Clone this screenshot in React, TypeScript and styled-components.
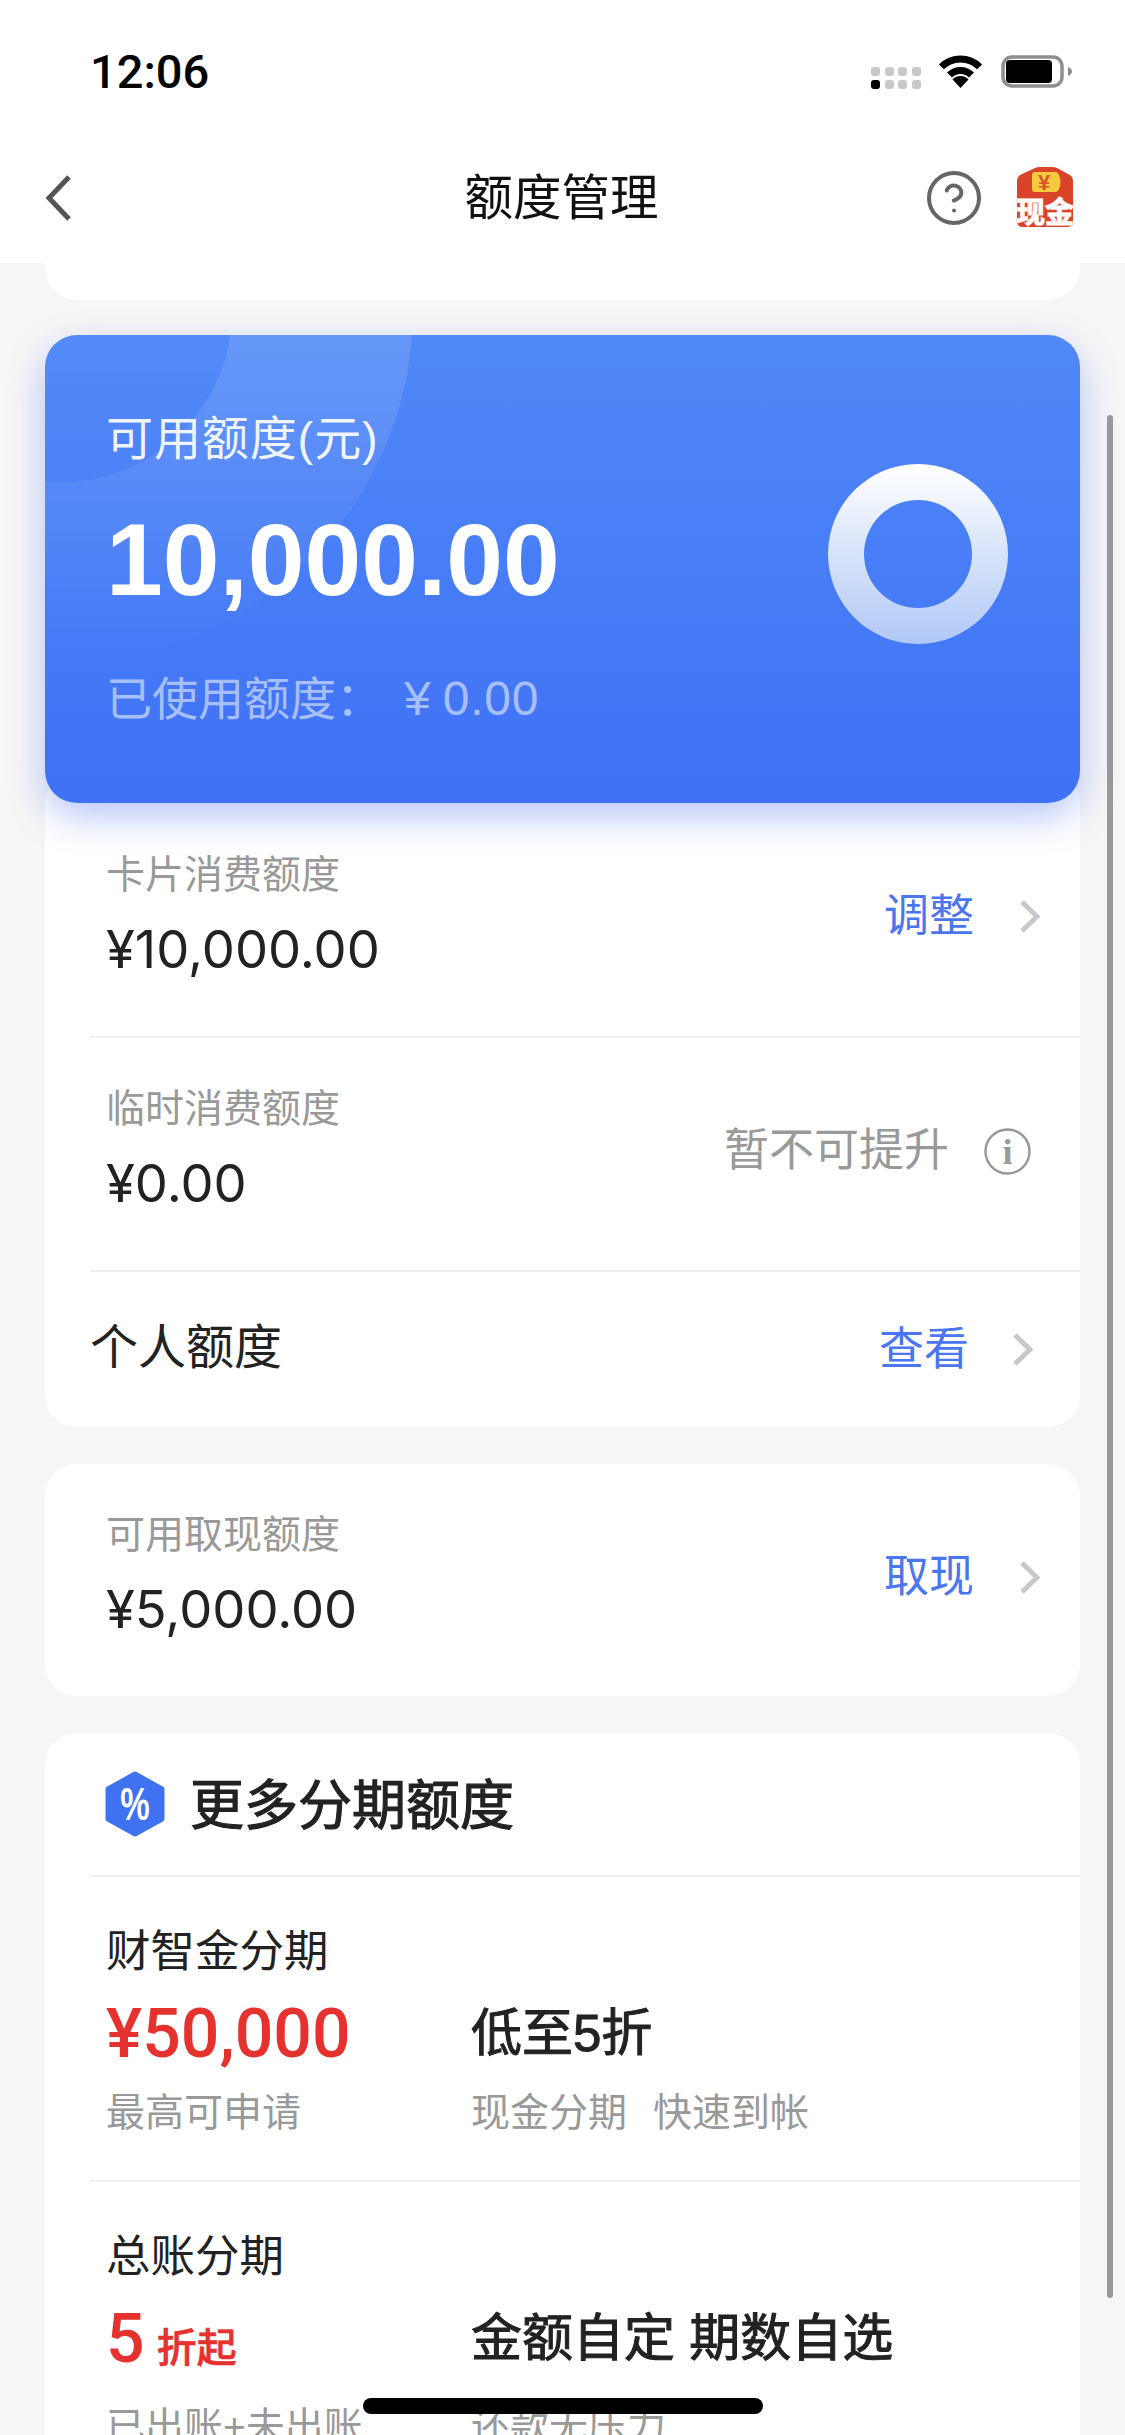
import styled, { createGlobalStyle } from "styled-components"
import { CircleHelp } from "lucide-react"

const FONT = `"Liberation Sans", "Noto Sans CJK SC", sans-serif`
const BLUE = "#4a76f0"
const GREY = "#999999"
const INK = "#222222"
const RED = "#e5322f"

const GlobalStyle = createGlobalStyle`
    * { box-sizing: border-box; }
    html, body {
        margin: 0;
        height: 2435px;
        overflow: hidden;
        background: #f6f6f6;
        font-family: ${FONT};
    }
`

const Page = styled.div`
    position: relative;
    width: 1125px;
    height: 2435px;
    overflow: hidden;
    background: #f6f6f6;
`

const Header = styled.header`
    position: relative;
    z-index: 2;
    background: #ffffff;
`

const StatusBar = styled.div`
    display: flex;
    align-items: center;
    height: 131px;
    padding: 49px 53px 38px 90px;
`

const Time = styled.div`
    font-family: Roboto, sans-serif;
    font-size: 47px;
    font-weight: 500;
    color: #000000;
    margin-right: auto;
`

const SignalIcon = styled.svg`
    margin: 13px 16px 0 0;
`

const WifiIcon = styled.svg`
    margin-right: 17px;
`

const NavBar = styled.nav`
    display: grid;
    grid-template-columns: 1fr auto 1fr;
    align-items: center;
    height: 132px;
    padding: 2px 50px 0 45px;
`

const NavTitle = styled.h1`
    margin: 0 0 0 3px;
    font-size: 48.5px;
    font-weight: 400;
    line-height: 60px;
    color: #111111;
`

const NavActions = styled.div`
    display: flex;
    align-items: center;
    justify-content: flex-end;
    gap: 31px;
    color: #666666;
`

const Content = styled.main`
    padding: 0 45px;
`

const TopSliver = styled.div`
    height: 37px;
    background: #ffffff;
    border-radius: 0 0 32px 32px;
`

const QuotaCard = styled.section`
    position: relative;
    z-index: 1;
    display: flex;
    justify-content: space-between;
    height: 468px;
    margin-top: 35px;
    padding: 81px 72px 0 61px;
    overflow: hidden;
    border-radius: 32px;
    background: linear-gradient(180deg, #5089f8 0%, #3f71f5 100%);
`

const QuotaShadow = styled.div`
    position: relative;
    z-index: 1;
    border-radius: 32px;
    box-shadow: 0 14px 36px rgba(63, 100, 235, 0.36);
`

const QuotaGlow = styled.div`
    position: absolute;
    left: -338px;
    top: -378px;
    width: 706px;
    height: 706px;
    border-radius: 50%;
    background: radial-gradient(circle at center, rgba(255, 255, 255, 0.02) 172px, rgba(255, 255, 255, 0.13) 172.5px);
    mask-image: linear-gradient(180deg, #000 54%, transparent 100%);
`

const QuotaText = styled.div`
    position: relative;
`

const QuotaLabel = styled.div`
    font-size: 47px;
    line-height: 45px;
    letter-spacing: 0.9px;
    color: rgba(255, 255, 255, 0.92);
`

const QuotaAmount = styled.div`
    margin-top: 49px;
    font-size: 102px;
    font-weight: 700;
    line-height: 100px;
    color: #ffffff;
`

const QuotaUsed = styled.div`
    margin-top: 66px;
    font-size: 46px;
    line-height: 45px;
    color: rgba(255, 255, 255, 0.55);
`

const UsedValue = styled.span`
    margin-left: 22px;
    font-size: 48px;
    letter-spacing: 0.8px;
    word-spacing: -3px;
`

const QuotaRing = styled.svg`
    position: relative;
    margin-top: 48px;
`

const Card = styled.section`
    margin-top: 37px;
    padding-left: 45px;
    overflow: hidden;
    background: #ffffff;
    border-radius: 32px;
`

const ListCard = styled(Card)`
    margin-top: -32px;
    padding-top: 32px;
`

const Row = styled.div<{ $height: number; $end: number; $flush?: boolean }>`
    display: flex;
    align-items: center;
    justify-content: space-between;
    height: ${p => p.$height}px;
    padding: 0 ${p => p.$end}px ${p => (p.$flush ? 0 : 6)}px ${p => (p.$flush ? 0 : 16)}px;
    & + & {
        border-top: 2px solid #eeeeee;
    }
`

const RowText = styled.div`
    margin-bottom: 2px;
`

const RowLabel = styled.div`
    font-size: 39px;
    line-height: 38px;
    color: ${GREY};
`

const RowValue = styled.div`
    margin-top: 28px;
    font-family: Inter, ${FONT};
    font-size: 52.5px;
    line-height: 54px;
    color: ${INK};
`

const RowTitle = styled.div`
    margin-bottom: 3px;
    font-size: 48px;
    line-height: 56px;
    color: ${INK};
`

const RowAction = styled.div<{ $gap: number }>`
    display: flex;
    align-items: center;
    gap: ${p => p.$gap}px;
`

const ActionText = styled.span<{ $muted?: boolean }>`
    font-size: 45px;
    line-height: 50px;
    color: ${p => (p.$muted ? GREY : BLUE)};
`

const SectionHead = styled.div`
    display: flex;
    align-items: center;
    gap: 25px;
    height: 142px;
    padding-left: 15px;
`

const SectionTitle = styled.h2`
    margin: 3px 0 0;
    font-size: 54px;
    font-weight: 400;
    line-height: 60px;
    color: ${INK};
    -webkit-text-stroke: 1.1px ${INK};
`

const Plan = styled.div`
    display: grid;
    grid-template-columns: 365px 1fr;
    align-content: start;
    row-gap: 25px;
    height: 305px;
    padding: 53px 0 0 16px;
    border-top: 2px solid #eeeeee;
`

const PlanName = styled.div`
    grid-column: 1 / -1;
    font-size: 44.5px;
    line-height: 44px;
    color: ${INK};
`

const PlanFigure = styled.div`
    display: flex;
    align-items: baseline;
    font-family: Roboto, ${FONT};
    font-size: 68px;
    font-weight: 500;
    line-height: 70px;
    color: ${RED};
`

const FigureUnit = styled.span`
    margin-left: 12px;
    font-family: ${FONT};
    font-size: 40px;
    -webkit-text-stroke: 0.6px ${RED};
`

const PlanPitch = styled.div`
    font-size: 51px;
    line-height: 70px;
    color: ${INK};
    -webkit-text-stroke: 1px ${INK};
`

const PlanNote = styled.div`
    font-size: 39px;
    line-height: 38px;
    color: ${GREY};
`

const NoteGap = styled.span`
    margin-left: 26px;
`

const ScrollThumb = styled.div`
    position: absolute;
    z-index: 3;
    top: 415px;
    right: 12px;
    width: 6px;
    height: 1883px;
    border-radius: 3px;
    background: #999999;
`

const HomeBar = styled.div`
    position: absolute;
    z-index: 3;
    left: 363px;
    bottom: 21px;
    width: 400px;
    height: 16px;
    border-radius: 8px;
    background: #000000;
`

const Signal = () => (
    <SignalIcon width="50" height="22" viewBox="0 0 50 22">
        {[0, 1].map(row =>
            [0, 14, 27, 41].map((x, col) => (
                <rect
                    key={`${row}-${col}`}
                    x={x}
                    y={row * 13}
                    width="9"
                    height="9"
                    rx="3"
                    fill={row === 1 && col === 0 ? "#000000" : "#c8c8c8"}
                />
            ))
        )}
    </SignalIcon>
)

const Wifi = () => (
    <WifiIcon width="47" height="34" viewBox="0 0 47 34">
        <path d="M4.4 12.9A27 27 0 0 1 42.6 12.9" fill="none" stroke="#000" strokeWidth="7" />
        <path d="M12.5 21A15.5 15.5 0 0 1 34.5 21" fill="none" stroke="#000" strokeWidth="7" />
        <path d="M23.5 34L15.5 25.5A11 11 0 0 1 31.5 25.5Z" fill="#000" />
    </WifiIcon>
)

const Battery = () => (
    <svg width="71" height="33" viewBox="0 0 71 33">
        <rect x="2" y="2" width="59" height="29" rx="9" fill="none" stroke="#8e8e8e" strokeWidth="3.5" />
        <rect x="5" y="5" width="46" height="23" rx="4" fill="#000" />
        <path d="M67 12C70 13 71 15 71 16.500C71 18 70 20 67 21Z" fill="#8e8e8e" />
    </svg>
)

const BackArrow = () => (
    <svg width="27" height="48" viewBox="0 0 27 48">
        <path d="M24 3L4 24L24 45" fill="none" stroke="#555555" strokeWidth="5" />
    </svg>
)

const RedPacket = () => (
    <svg width="60" height="62" viewBox="0 0 60 62" overflow="visible">
        <path d="M2 14Q2 9 7 7L20 1Q22 0 25 0H37Q40 0 42 1L53 7Q58 9 58 14V54Q58 60 52 60H8Q2 60 2 54Z" fill="#d9432a" />
        <path d="M17 8Q17 5 20 5H40Q43 5 44 8Q47 15 44 22Q43 25 40 25H20Q17 25 17 22Z" fill="#f6c93e" />
        <text x="29" y="23" fontFamily="Liberation Sans" fontSize="22" fontWeight="700" textAnchor="middle" fill="#d9532a">¥</text>
        <text
            x="30"
            y="56"
            fontFamily="Noto Sans CJK SC"
            fontSize="29"
            fontWeight="700"
            textAnchor="middle"
            fill="#ffffff"
            stroke="#f7cfc5"
            strokeWidth="1.5"
            paintOrder="stroke"
        >
            现金
        </text>
    </svg>
)

const Ring = () => (
    <QuotaRing width="180" height="180" viewBox="0 0 180 180">
        <defs>
            <linearGradient id="ringFill" x1="0" y1="0" x2="0" y2="1">
                <stop offset="0" stopColor="#ffffff" />
                <stop offset="1" stopColor="#b0c8f6" />
            </linearGradient>
        </defs>
        <path
            fillRule="evenodd"
            fill="url(#ringFill)"
            d="M90 0A90 90 0 1 1 90 180A90 90 0 1 1 90 0ZM90 36A54 54 0 1 0 90 144A54 54 0 1 0 90 36Z"
        />
    </QuotaRing>
)

const Chevron = () => (
    <svg width="21" height="33" viewBox="0 0 21 33">
        <path d="M3 2L18 16.500L3 31" fill="none" stroke="#c7c7cc" strokeWidth="5" />
    </svg>
)

const InfoIcon = () => (
    <svg width="47" height="47" viewBox="0 0 47 47">
        <circle cx="23.500" cy="23.500" r="22" fill="none" stroke={GREY} strokeWidth="2.500" />
        <text x="23.500" y="36" fontFamily="Liberation Serif" fontSize="36" fontWeight="700" textAnchor="middle" fill={GREY}>i</text>
    </svg>
)

const PercentBadge = () => (
    <svg width="60" height="66" viewBox="0 0 60 66">
        <path d="M30 3L57 18V48L30 63L3 48V18Z" fill="#3f72f0" stroke="#3f72f0" strokeWidth="5" strokeLinejoin="round" />
        <text
            transform="translate(30 49) scale(0.72 1)"
            fontFamily="Liberation Sans"
            fontSize="46"
            fontWeight="700"
            textAnchor="middle"
            fill="#ffffff"
        >
            %
        </text>
    </svg>
)

const App = () => {
    return (
        <Page>
            <GlobalStyle />
            <Header>
                <StatusBar>
                    <Time>12:06</Time>
                    <Signal />
                    <Wifi />
                    <Battery />
                </StatusBar>
                <NavBar>
                    <BackArrow />
                    <NavTitle>额度管理</NavTitle>
                    <NavActions>
                        <CircleHelp size={60} strokeWidth={1.6} />
                        <RedPacket />
                    </NavActions>
                </NavBar>
            </Header>
            <Content>
                <TopSliver />
                <QuotaShadow>
                    <QuotaCard>
                        <QuotaGlow />
                        <QuotaText>
                            <QuotaLabel>可用额度(元)</QuotaLabel>
                            <QuotaAmount>10,000.00</QuotaAmount>
                            <QuotaUsed>已使用额度：<UsedValue>¥ 0.00</UsedValue></QuotaUsed>
                        </QuotaText>
                        <Ring />
                    </QuotaCard>
                </QuotaShadow>
                <ListCard>
                    <Row $height={233} $end={40}>
                        <RowText>
                            <RowLabel>卡片消费额度</RowLabel>
                            <RowValue>¥10,000.00</RowValue>
                        </RowText>
                        <RowAction $gap={45}>
                            <ActionText>调整</ActionText>
                            <Chevron />
                        </RowAction>
                    </Row>
                    <Row $height={234} $end={49}>
                        <RowText>
                            <RowLabel>临时消费额度</RowLabel>
                            <RowValue>¥0.00</RowValue>
                        </RowText>
                        <RowAction $gap={35}>
                            <ActionText $muted>暂不可提升</ActionText>
                            <InfoIcon />
                        </RowAction>
                    </Row>
                    <Row $height={157} $end={47} $flush>
                        <RowTitle>个人额度</RowTitle>
                        <RowAction $gap={43}>
                            <ActionText>查看</ActionText>
                            <Chevron />
                        </RowAction>
                    </Row>
                </ListCard>
                <Card>
                    <Row $height={232} $end={40}>
                        <RowText>
                            <RowLabel>可用取现额度</RowLabel>
                            <RowValue>¥5,000.00</RowValue>
                        </RowText>
                        <RowAction $gap={45}>
                            <ActionText>取现</ActionText>
                            <Chevron />
                        </RowAction>
                    </Row>
                </Card>
                <Card>
                    <SectionHead>
                        <PercentBadge />
                        <SectionTitle>更多分期额度</SectionTitle>
                    </SectionHead>
                    <Plan>
                        <PlanName>财智金分期</PlanName>
                        <PlanFigure>¥50,000</PlanFigure>
                        <PlanPitch>低至5折</PlanPitch>
                        <PlanNote>最高可申请</PlanNote>
                        <PlanNote>现金分期<NoteGap>快速到帐</NoteGap></PlanNote>
                    </Plan>
                    <Plan>
                        <PlanName>总账分期</PlanName>
                        <PlanFigure>5<FigureUnit>折起</FigureUnit></PlanFigure>
                        <PlanPitch>金额自定 期数自选</PlanPitch>
                        <PlanNote>已出账+未出账</PlanNote>
                        <PlanNote>还款无压力</PlanNote>
                    </Plan>
                </Card>
            </Content>
            <ScrollThumb />
            <HomeBar />
        </Page>
    )
}

export default App
